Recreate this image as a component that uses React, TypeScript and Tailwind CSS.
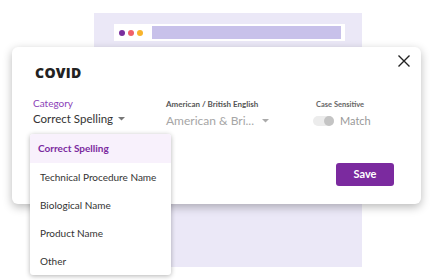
import React from "react";

const items = ["Technical Procedure Name", "Biological Name", "Product Name", "Other"];

const Caret = ({ className }: { className: string }) => (
  <svg width="7" height="4" viewBox="0 0 7 4" className={className}>
    <path d="M0 0h7L3.5 3.5z" fill="currentColor" />
  </svg>
);

export default function App() {
  return (
    <div className="relative w-[430px] h-[280px] overflow-hidden bg-white font-['Lato',sans-serif]">
      {/* page illustration behind the dialog */}
      <div className="ml-[94px] mt-[13px] w-[268px] h-[254px] bg-[#ebe8f7] pt-[11px] px-[20px]">
        <div className="flex items-center gap-[3px] h-[17px] w-[231px] bg-white pl-[5px] pr-[4px]">
          <span className="w-[6px] h-[6px] rounded-full bg-[#7a2f9e]" />
          <span className="w-[6px] h-[6px] rounded-full bg-[#f0606b]" />
          <span className="w-[6px] h-[6px] rounded-full bg-[#f8b42c]" />
          <div className="ml-[6px] flex-1 h-[13px] bg-[#c8c1ea]" />
        </div>
      </div>

      {/* dialog */}
      <div className="absolute left-[12px] top-[47px] w-[409px] h-[157px] rounded-[6px] bg-white shadow-[0_3px_10px_rgba(0,0,0,0.28)]">
        <div className="flex justify-between pl-[23px] pr-[10px] pt-[7px]">
          <div className="pt-[8px] text-[14px] font-extrabold text-[#222] font-['Open_Sans',sans-serif] tracking-[0.3px]">COVID</div>
          <svg width="14" height="14" viewBox="0 0 14 14">
            <path d="M1.5 1.5l11 11M12.5 1.5l-11 11" stroke="#222" strokeWidth="1.4" />
          </svg>
        </div>
        <div className="flex pl-[21px] pt-[14px]">
          <div className="w-[133px]">
            <div className="text-[10px] leading-[12px] text-[#8c3fb8]">Category</div>
            <div className="flex items-center gap-[5px] mt-[2px] text-[11.5px] leading-[15px] text-[#333]">
              Correct Spelling
              <Caret className="text-[#777]" />
            </div>
          </div>
          <div className="w-[147px] pt-[2px]">
            <div className="text-[8px] leading-[10px] font-bold text-[#555]">American / British English</div>
            <div className="flex items-center mt-[4px] text-[12px] leading-[15px] text-[#a6a6a6]">
              <span className="w-[96px]">American &amp; Bri...</span>
              <Caret className="text-[#aaa]" />
            </div>
          </div>
          <div className="pt-[3px]">
            <div className="ml-[3px] text-[7.5px] leading-[10px] font-bold text-[#666]">Case Sensitive</div>
            <div className="flex items-center gap-[6px] mt-[4px]">
              <div className="relative w-[21px] h-[10px] rounded-full bg-[#ececec]">
                <span className="absolute right-[0px] top-[0px] w-[10px] h-[10px] rounded-full bg-[#c4c4c4]" />
              </div>
              <span className="text-[11px] leading-[13px] text-[#999]">Match</span>
            </div>
          </div>
        </div>
        <div className="flex justify-end pr-[27px] pt-[35px]">
          <button className="w-[58px] h-[23px] rounded-[3px] bg-[#7b2a9f] text-white text-[11px] font-bold">Save</button>
        </div>
      </div>

      {/* category dropdown menu */}
      <div className="absolute left-[30px] top-[134px] w-[141px] h-[141px] rounded-[3px] bg-white shadow-[0_1px_5px_rgba(0,0,0,0.3)] overflow-hidden">
        <div className="h-[29px] flex items-center pl-[8px] bg-[#f8f1fc] text-[10px] font-bold text-[#7b2a9f]">Correct Spelling</div>
        {items.map((t) => (
          <div key={t} className="h-[28px] flex items-center pl-[10px] text-[10px] text-[#333]">
            {t}
          </div>
        ))}
      </div>
    </div>
  );
}
